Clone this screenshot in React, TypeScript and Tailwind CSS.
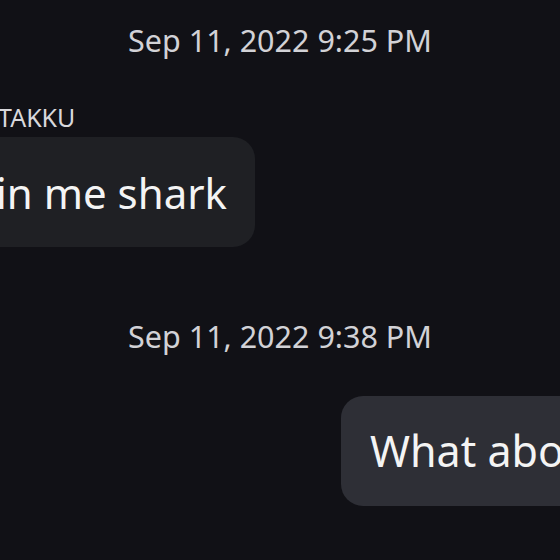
import React from "react";

export default function App() {
  return (
    <div
      className="w-[560px] h-[560px] overflow-hidden bg-[#111116] flex flex-col"
      style={{ fontFamily: '"Noto Sans", sans-serif' }}
    >
      <div className="w-[560px] pt-[18px] text-center text-[30.5px] leading-[44px] text-[#d2d2d6]">
        Sep 11, 2022 9:25 PM
      </div>
      <div className="mt-[41px] text-[25px] leading-[28px] text-[#d8d8dc] -ml-[2px]">TAKKU</div>
      <div className="mt-[6px] flex">
        <div className="h-[110px] -ml-[32px] pl-[28px] pr-[28px] rounded-[22px] bg-[#1f2024] flex items-center text-[42px] text-[#f4f4f4]">
          in me shark
        </div>
      </div>
      <div className="w-[560px] mt-[67px] text-center text-[30.5px] leading-[44px] text-[#d2d2d6]">
        Sep 11, 2022 9:38 PM
      </div>
      <div className="mt-[38px] flex">
        <div className="ml-[341px] h-[110px] w-[300px] shrink-0 pl-[29px] rounded-[22px] bg-[#2e2f36] flex items-center text-[43px] text-[#f4f4f4]">
          What abo
        </div>
      </div>
    </div>
  );
}
